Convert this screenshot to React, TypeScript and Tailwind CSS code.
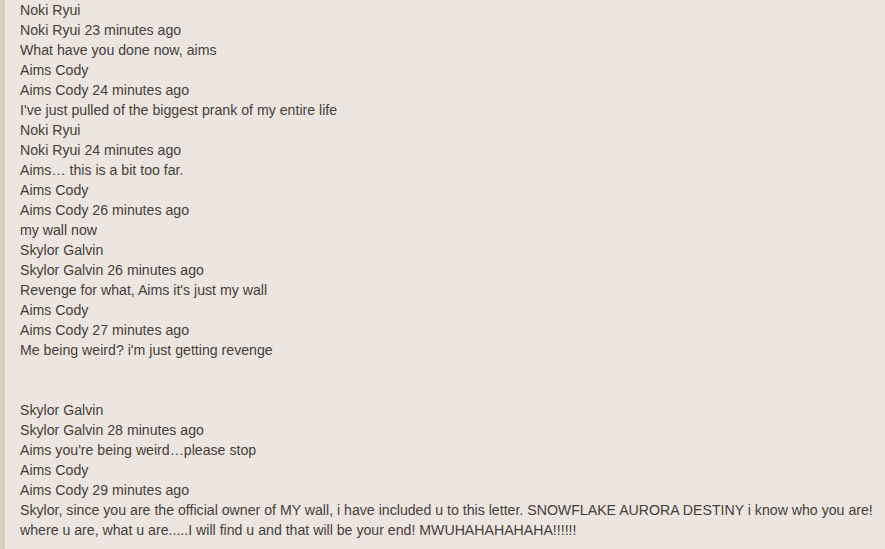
type Comment = {
  author: string;
  time: string;
  body: string;
  gapBefore?: boolean;
};

const comments: Comment[] = [
  { author: "Noki Ryui", time: "23 minutes ago", body: "What have you done now, aims" },
  { author: "Aims Cody", time: "24 minutes ago", body: "I've just pulled of the biggest prank of my entire life" },
  { author: "Noki Ryui", time: "24 minutes ago", body: "Aims… this is a bit too far." },
  { author: "Aims Cody", time: "26 minutes ago", body: "my wall now" },
  { author: "Skylor Galvin", time: "26 minutes ago", body: "Revenge for what, Aims it's just my wall" },
  { author: "Aims Cody", time: "27 minutes ago", body: "Me being weird? i'm just getting revenge" },
  { author: "Skylor Galvin", time: "28 minutes ago", body: "Aims you're being weird…please stop", gapBefore: true },
  {
    author: "Aims Cody",
    time: "29 minutes ago",
    body:
      "Skylor, since you are the official owner of MY wall, i have included u to this letter. SNOWFLAKE AURORA DESTINY i know who you are! where u are, what u are.....I will find u and that will be your end! MWUHAHAHAHAHA!!!!!!",
  },
];

export default function App() {
  return (
    <div className="flex h-[549px] w-[885px] overflow-hidden bg-[#ede5df] font-['Liberation_Sans',Arial,sans-serif] text-[14.15px] leading-[20px] text-[#46403b]">
      <div className="w-[5px] shrink-0 bg-[#d8cdc1]" />
      <ul className="flex-1 pl-[15px]">
        {comments.map((c, i) => (
          <li key={i} className={c.gapBefore ? "mt-[40px]" : ""}>
            <p>{c.author}</p>
            <p>
              {c.author} {c.time}
            </p>
            <p>{c.body}</p>
          </li>
        ))}
      </ul>
    </div>
  );
}
